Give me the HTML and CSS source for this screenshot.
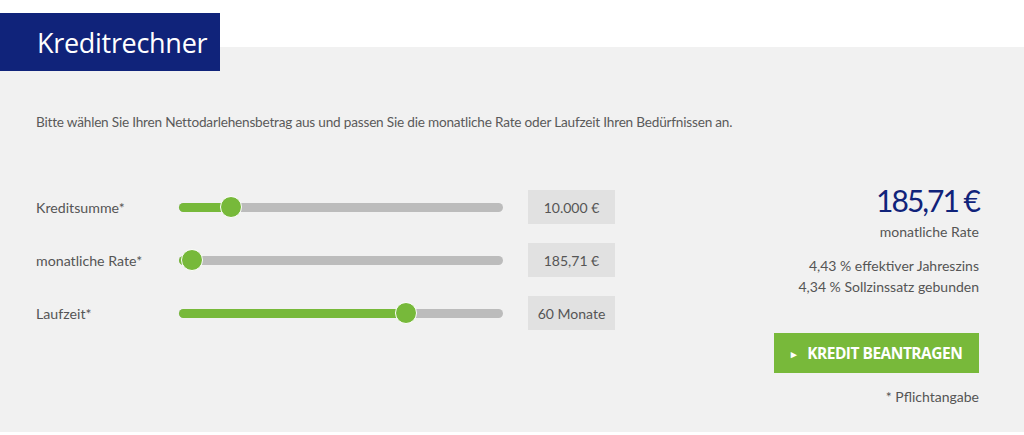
FILE: index.html
```html
<!DOCTYPE html>
<html lang="de">
<head>
<meta charset="utf-8">
<link rel="stylesheet" href="styles.css">
</head>
<body>
<div class="page">
  <div class="tab"><h1>Kreditrechner</h1></div>
  <div class="panel">
    <p class="intro">Bitte wählen Sie Ihren Nettodarlehensbetrag aus und passen Sie die monatliche Rate oder Laufzeit Ihren Bedürfnissen an.</p>
    <div class="calc">
      <div class="rows">
        <div class="row">
          <div class="label">Kreditsumme*</div>
          <div class="slider"><div class="fill" style="width:52px"></div><div class="thumb" style="left:52px"></div></div>
          <div class="value">10.000 €</div>
        </div>
        <div class="row">
          <div class="label">monatliche Rate*</div>
          <div class="slider"><div class="fill" style="width:13px"></div><div class="thumb" style="left:13px"></div></div>
          <div class="value">185,71 €</div>
        </div>
        <div class="row">
          <div class="label">Laufzeit*</div>
          <div class="slider"><div class="fill" style="width:227px"></div><div class="thumb" style="left:227px"></div></div>
          <div class="value">60 Monate</div>
        </div>
      </div>
      <div class="summary">
        <div class="rate">185,71 €</div>
        <div class="rate-label">monatliche Rate</div>
        <div class="rates">
          <div>4,43 % effektiver Jahreszins</div>
          <div>4,34 % Sollzinssatz gebunden</div>
        </div>
        <button class="apply"><span class="arrow">&#9656;</span>KREDIT BEANTRAGEN</button>
        <div class="note">* Pflichtangabe</div>
      </div>
    </div>
  </div>
</div>
</body>
</html>
```

FILE: styles.css
```css
* { box-sizing: border-box; }
html, body { margin: 0; padding: 0; background: #ffffff; }
body { font-family: Lato, "Open Sans", "Liberation Sans", sans-serif; color: #555555; }
.page { position: relative; width: 1024px; height: 435px; overflow: hidden; }
.tab {
  position: absolute; left: 0; top: 13px; width: 220px; height: 58px;
  background: #10237a; z-index: 2;
  display: flex; align-items: center;
}
.tab h1 {
  margin: 0; padding-left: 37px; color: #ffffff;
  font-family: "Open Sans", sans-serif; font-weight: 400; font-size: 27px; letter-spacing: -0.3px;
  line-height: 1;
}
.panel {
  margin-top: 47px; height: 385px; background: #f1f1f1;
  padding: 66px 45px 0 36px;
}
.intro { margin: 0; font-size: 13.6px; line-height: 18px; color: #5a5a5a; letter-spacing: -0.2px; }
.calc { display: flex; justify-content: space-between; margin-top: 52px; }
.rows { display: flex; flex-direction: column; gap: 19px; padding-top: 7px; }
.row { display: flex; align-items: center; height: 34px; }
.label { width: 143px; font-size: 14.2px; color: #555555; }
.slider { position: relative; width: 324px; height: 9px; border-radius: 5px; background: #bcbcbc; }
.fill { position: absolute; left: 0; top: 0; height: 9px; border-radius: 5px; background: #77b93a; }
.thumb {
  position: absolute; top: 50%; width: 22px; height: 22px; margin: -11px 0 0 -11px;
  border-radius: 50%; background: #77b93a; border: 1.5px solid #ffffff;
}
.value {
  margin-left: 25px; width: 87px; height: 34px; background: #e1e1e1;
  display: flex; align-items: center; justify-content: center;
  font-size: 14px; color: #555555;
}
.summary { display: flex; flex-direction: column; align-items: flex-end; }
.rate { font-size: 30px; color: #10237a; line-height: 34px; letter-spacing: -2px; }
.rate-label { margin-top: 6px; font-size: 14px; line-height: 18px; }
.rates { margin-top: 14px; text-align: right; font-size: 14px; line-height: 21px; }
.apply {
  margin-top: 36px; width: 205px; height: 40px; border: 0; background: #78b93a; color: #ffffff;
  font-family: "Open Sans", sans-serif; font-weight: 700; font-size: 15.5px; letter-spacing: -0.5px;
  display: flex; align-items: center; justify-content: center; padding: 0;
}
.arrow { font-size: 11px; margin-right: 11px; }
.note { margin-top: 15px; font-size: 14px; line-height: 18px; }
```
